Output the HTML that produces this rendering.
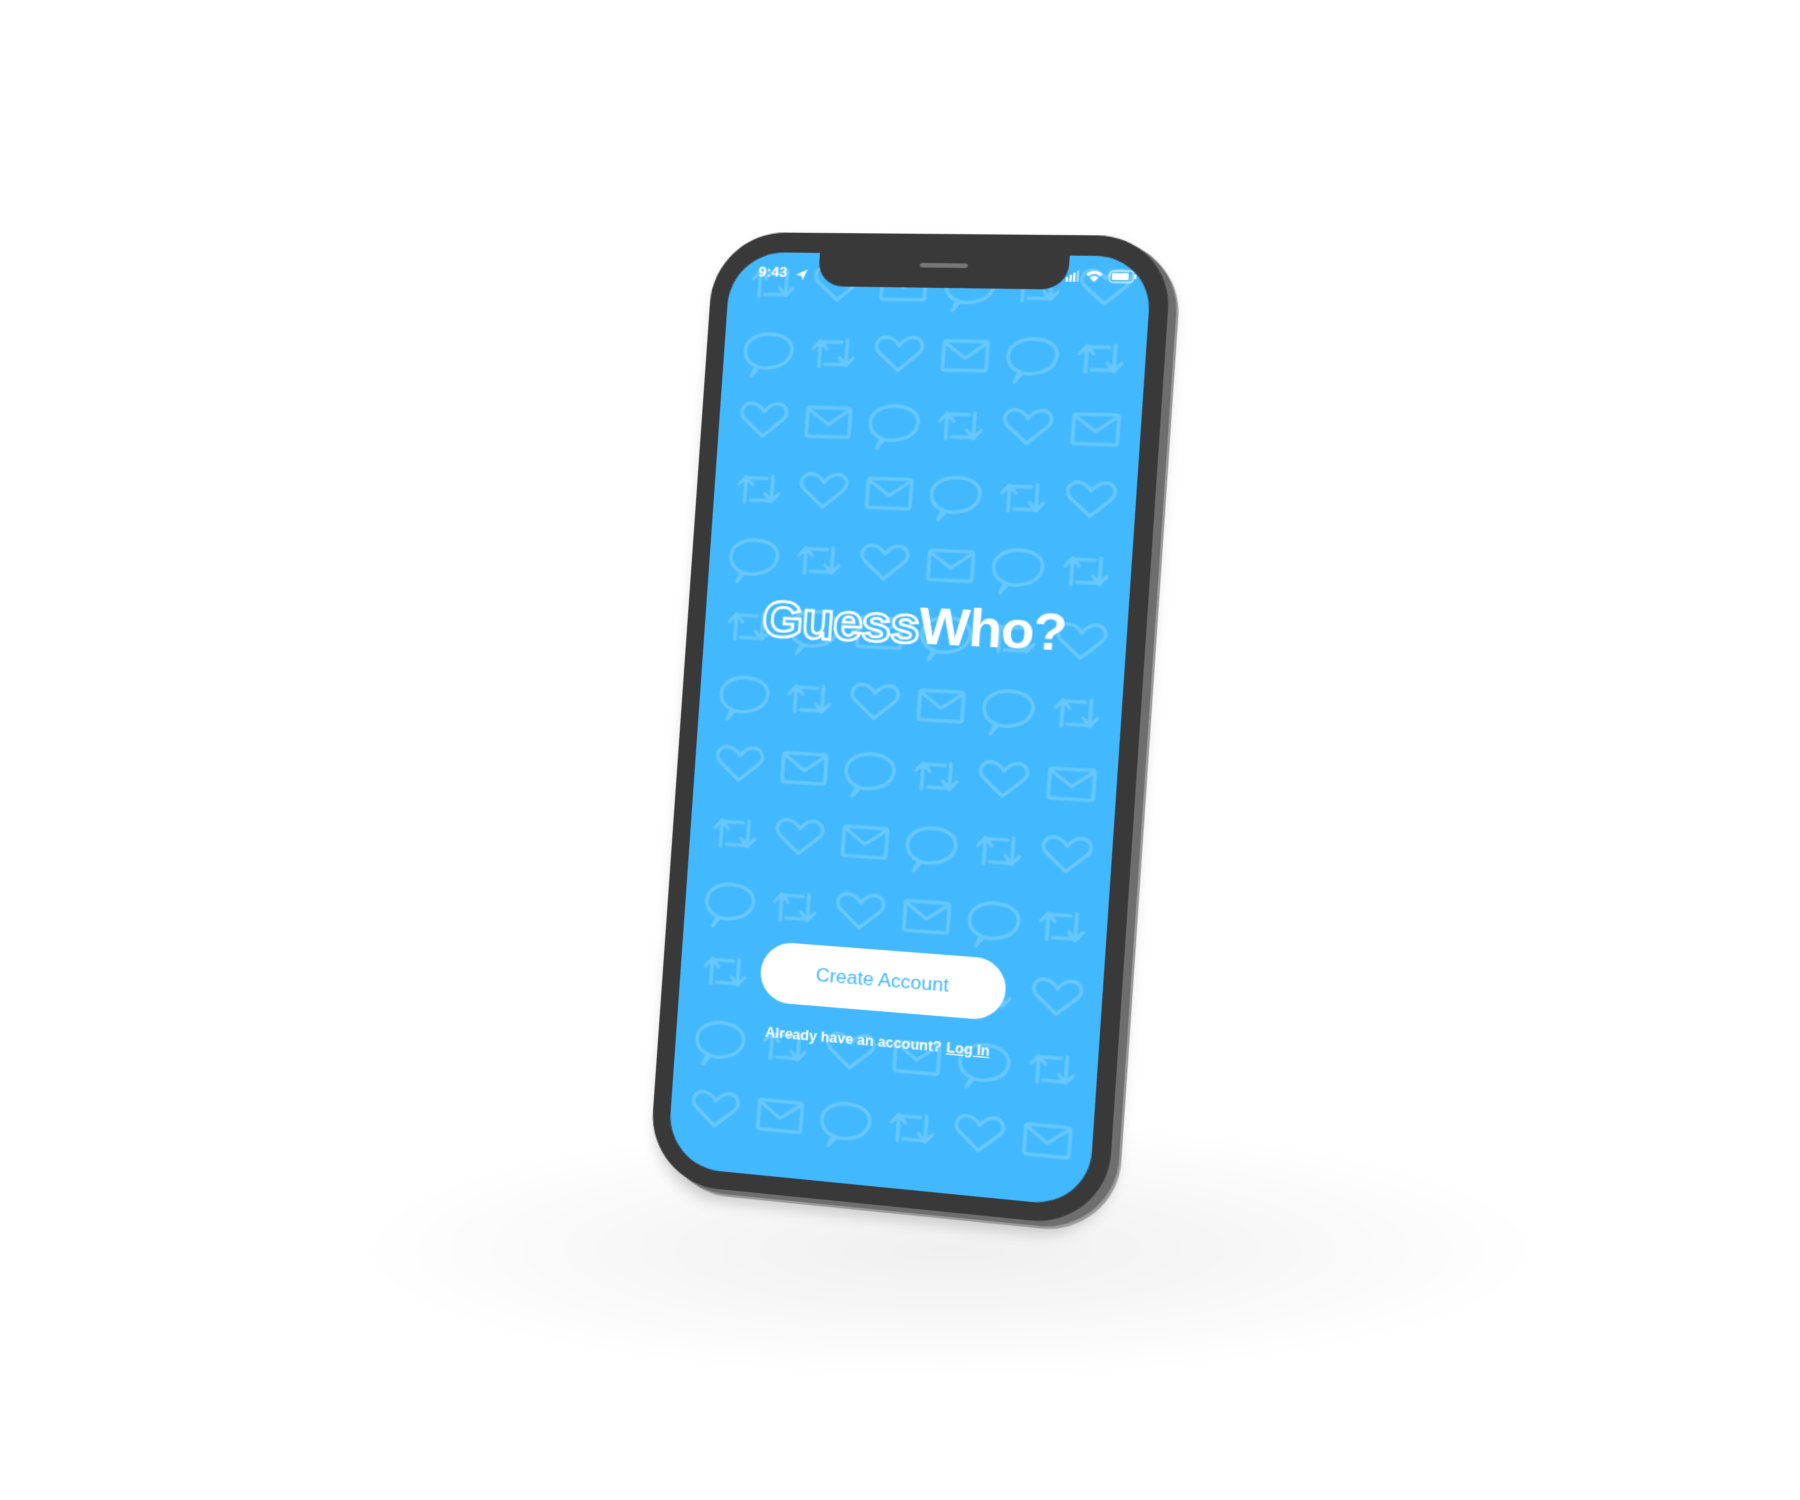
<!DOCTYPE html>
<html><head><meta charset="utf-8">
<style>
html,body{margin:0;padding:0;width:1800px;height:1500px;background:#fff;overflow:hidden;font-family:"Liberation Sans",sans-serif;}
.floor{position:absolute;left:350px;top:1120px;width:1200px;height:260px;border-radius:50%;background:radial-gradient(ellipse at center,rgba(0,0,0,0.06) 0%,rgba(0,0,0,0.03) 35%,rgba(0,0,0,0) 70%);}
.phone{position:absolute;left:0;top:0;width:400px;height:860px;transform-origin:0 0;
transform:matrix3d(1.02168,-0.0148,0,-0.00010513,-0.082547,1.0962,0,-0.0000071535,0,0,1,0,715,232,0,1);}
.body{position:absolute;left:0;top:0;width:400px;height:860px;border-radius:64px;background:#393939;box-shadow:7px 4px 0 #6e6e6e,9px 6px 0 #9a9a9a,4px 10px 14px rgba(0,0,0,0.2);}
.screen{position:absolute;left:16px;top:18px;width:368px;height:826px;border-radius:48px;background:#42b8fe;overflow:hidden;}
.notch{position:absolute;left:80px;top:-2px;width:218px;height:32px;background:#393939;border-radius:0 0 22px 22px;}
.spk{position:absolute;left:89px;top:10px;width:42px;height:4px;border-radius:2px;background:#777;}
.time{position:absolute;left:26px;top:10px;color:#fff;font-size:13px;font-weight:bold;}
.logo{position:absolute;left:0;width:368px;top:302px;text-align:center;font-size:47px;font-weight:bold;letter-spacing:-1px;white-space:nowrap;}
.logo .g{color:#42b8fe;-webkit-text-stroke:2.5px #fff;}
.logo .w{color:#fff;}
.btn{position:absolute;left:72px;top:618px;width:214px;height:54px;border-radius:27px;background:#fff;color:#42b8fe;font-size:17px;text-align:center;line-height:54px;}
.sub{position:absolute;left:-6px;width:368px;top:692px;text-align:center;color:#fff;font-size:12.5px;font-weight:bold;white-space:nowrap;}
.sub u{margin-left:4px;}
</style></head><body>
<div class="floor"></div>
<div class="phone">
 <div class="body">
  <div class="screen">
   <svg width="368" height="826" style="position:absolute;left:0;top:0">
    <defs>
     <g id="b" fill="none" stroke="#66c8ff" stroke-width="3.2" stroke-linejoin="round"><path d="M-10,13 C-22,9 -24,-4 -16,-11 C-8,-18 10,-18 18,-10 C24,-3 21,9 8,13 C2,15 -4,15 -8,14 L-14,22 Z"/></g>
     <g id="h" fill="none" stroke="#66c8ff" stroke-width="3.2" stroke-linejoin="round"><path d="M0,14 L-17,-1 C-24,-8 -18,-17 -9,-15 C-5,-14 -2,-11 0,-8 C2,-11 5,-14 9,-15 C18,-17 24,-8 17,-1 Z"/></g>
     <g id="m" fill="none" stroke="#66c8ff" stroke-width="3.2" stroke-linejoin="round"><rect x="-19" y="-13" width="38" height="26" rx="2"/><path d="M-19,-12 L0,2 L19,-12"/></g>
     <g id="r" fill="none" stroke="#66c8ff" stroke-width="3.2" stroke-linejoin="round" stroke-linecap="round"><path d="M-12,12 V-10 H7 M-18,-4 L-12,-11 L-6,-4 M12,-12 V10 H-7 M6,4 L12,11 L18,4"/></g>
    </defs>
    <g transform="translate(0,28)"><use href="#r" x="40"/><use href="#h" x="98"/><use href="#m" x="156"/><use href="#b" x="214"/><use href="#r" x="272"/><use href="#h" x="330"/></g>
    <g transform="translate(0,90)"><use href="#b" x="40"/><use href="#r" x="98"/><use href="#h" x="156"/><use href="#m" x="214"/><use href="#b" x="272"/><use href="#r" x="330"/></g>
    <g transform="translate(0,152)"><use href="#h" x="40"/><use href="#m" x="98"/><use href="#b" x="156"/><use href="#r" x="214"/><use href="#h" x="272"/><use href="#m" x="330"/></g>
    <g transform="translate(0,214)"><use href="#r" x="40"/><use href="#h" x="98"/><use href="#m" x="156"/><use href="#b" x="214"/><use href="#r" x="272"/><use href="#h" x="330"/></g>
    <g transform="translate(0,276)"><use href="#b" x="40"/><use href="#r" x="98"/><use href="#h" x="156"/><use href="#m" x="214"/><use href="#b" x="272"/><use href="#r" x="330"/></g>
    <g transform="translate(0,338)"><use href="#r" x="40"/><use href="#b" x="98"/><use href="#m" x="156"/><use href="#b" x="214"/><use href="#r" x="272"/><use href="#h" x="330"/></g>
    <g transform="translate(0,400)"><use href="#b" x="40"/><use href="#r" x="98"/><use href="#h" x="156"/><use href="#m" x="214"/><use href="#b" x="272"/><use href="#r" x="330"/></g>
    <g transform="translate(0,462)"><use href="#h" x="40"/><use href="#m" x="98"/><use href="#b" x="156"/><use href="#r" x="214"/><use href="#h" x="272"/><use href="#m" x="330"/></g>
    <g transform="translate(0,524)"><use href="#r" x="40"/><use href="#h" x="98"/><use href="#m" x="156"/><use href="#b" x="214"/><use href="#r" x="272"/><use href="#h" x="330"/></g>
    <g transform="translate(0,586)"><use href="#b" x="40"/><use href="#r" x="98"/><use href="#h" x="156"/><use href="#m" x="214"/><use href="#b" x="272"/><use href="#r" x="330"/></g>
    <g transform="translate(0,648)"><use href="#r" x="40"/><use href="#h" x="98"/><use href="#m" x="156"/><use href="#b" x="214"/><use href="#r" x="272"/><use href="#h" x="330"/></g>
    <g transform="translate(0,710)"><use href="#b" x="40"/><use href="#r" x="98"/><use href="#h" x="156"/><use href="#m" x="214"/><use href="#b" x="272"/><use href="#r" x="330"/></g>
    <g transform="translate(0,772)"><use href="#h" x="40"/><use href="#m" x="98"/><use href="#b" x="156"/><use href="#r" x="214"/><use href="#h" x="272"/><use href="#m" x="330"/></g>
    <g fill="#fff"><path d="M60,20 L70,15 L66,25 L65,21 Z"/>
     <rect x="296" y="19" width="2" height="4"/><rect x="299" y="17" width="2" height="6"/><rect x="302" y="15" width="2" height="8"/><rect x="305" y="13" width="2" height="10" opacity="0.5"/>
     <path d="M313,16 Q320,10 327,16 L325,18 Q320,14 315,18 Z M316,19 Q320,16 324,19 L320,23 Z"/>
     <rect x="333" y="13" width="20" height="10" rx="2.5" fill="none" stroke="#fff" stroke-width="1"/><rect x="335" y="15" width="14" height="6" rx="1"/><rect x="354" y="16" width="1.5" height="4"/></g>
   </svg>
   <div class="notch"><div class="spk"></div></div>
   <div class="time">9:43</div>
   <div class="logo"><span class="g">Guess</span><span class="w">Who?</span></div>
   <div class="btn">Create Account</div>
   <div class="sub">Already have an account?<u>Log In</u></div>
  </div>
 </div>
</div>
</body></html>
